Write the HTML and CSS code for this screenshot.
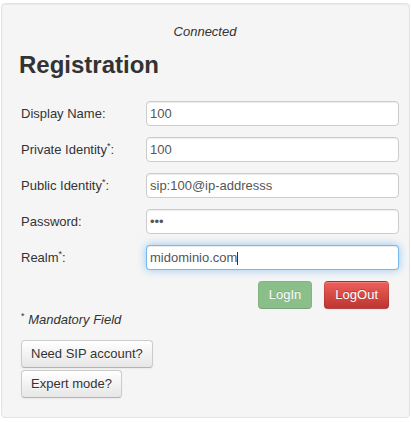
FILE: index.html
```html
<!DOCTYPE html>
<html lang="en">
<head>
    <meta charset="UTF-8">
    <title>Registration</title>
<link rel="stylesheet" href="styles.css">
</head>
<body>

<div class="page">
    <div class="well">
        <div class="status"><i>Connected</i></div>
        <h2>Registration</h2>

        <div class="form-grid">
            <label for="display-name">Display Name:</label>
            <input type="text" id="display-name" value="100">

            <label for="private-identity">Private Identity<sup>*</sup>:</label>
            <input type="text" id="private-identity" value="100">

            <label for="public-identity">Public Identity<sup>*</sup>:</label>
            <input type="text" id="public-identity" value="sip:100@ip-addresss">

            <label for="password">Password:</label>
            <input type="password" id="password" value="abc">

            <label for="realm">Realm<sup>*</sup>:</label>
            <div class="field-wrap">
                <input type="text" id="realm" class="focused" value="midominio.com">
                <span class="caret"></span>
            </div>
        </div>

        <div class="actions">
            <button class="btn btn-success disabled" type="button">LogIn</button>
            <button class="btn btn-danger" type="button">LogOut</button>
        </div>

        <p class="mandatory"><sup>*</sup> <i>Mandatory Field</i></p>

        <div class="extra">
            <button class="btn" type="button">Need SIP account?</button>
            <button class="btn" type="button">Expert mode?</button>
        </div>
    </div>
</div>

</body>
</html>
```

FILE: styles.css
```css
body {
  margin: 0;
  font-family: "Liberation Sans", Arial, sans-serif;
  font-size: 13px;
  line-height: 18px;
  color: #333;
}

.page {
  padding: 3px 1px;
}

.well {
  width: 409px;
  box-sizing: border-box;
  padding: 19px;
  background-color: #f5f5f5;
  border: 1px solid #e3e3e3;
  border-radius: 4px;
  box-shadow: inset 0 1px 1px rgba(0, 0, 0, 0.05);
}

.status {
  text-align: center;
  padding-right: 1px;
}

h2 {
  margin: 9px 0 0 -2px;
  font-size: 24px;
  line-height: 30px;
  font-weight: bold;
  color: #333;
}

.form-grid {
  display: grid;
  grid-template-columns: 125px 1fr;
  row-gap: 11px;
  align-items: center;
  margin: 21px -9px 0 0;
}

.form-grid label {
  display: block;
}

sup {
  font-size: 9px;
  line-height: 0;
  vertical-align: 5px;
}

input {
  display: block;
  width: 100%;
  height: 25px;
  box-sizing: border-box;
  padding: 0 3px;
  font-family: "Liberation Sans", Arial, sans-serif;
  font-size: 13px;
  color: #555;
  background-color: #fff;
  border: 1px solid #ccc;
  border-radius: 4px;
  box-shadow: inset 0 1px 1px rgba(0, 0, 0, 0.075);
  outline: none;
}

input.focused {
  border-color: rgba(82, 168, 236, 0.8);
  box-shadow: inset 0 1px 1px rgba(0, 0, 0, 0.075), 0 0 8px rgba(82, 168, 236, 0.6);
}

.field-wrap {
  position: relative;
}

.caret {
  position: absolute;
  left: 91px;
  top: 7px;
  width: 1px;
  height: 13px;
  background-color: #333;
}

.actions {
  display: flex;
  justify-content: flex-end;
  gap: 12px;
  margin-top: 11px;
  padding-right: 1px;
}

.btn {
  height: 28px;
  box-sizing: border-box;
  padding: 0 9px;
  font-family: "Liberation Sans", Arial, sans-serif;
  font-size: 13px;
  line-height: 26px;
  color: #333;
  text-shadow: 0 1px 1px rgba(255, 255, 255, 0.75);
  background-color: #f5f5f5;
  background-image: linear-gradient(#fff, #e6e6e6);
  border: 1px solid #ccc;
  border-bottom-color: #b3b3b3;
  border-radius: 4px;
  box-shadow: inset 0 1px 0 rgba(255, 255, 255, 0.2), 0 1px 2px rgba(0, 0, 0, 0.05);
  cursor: pointer;
}

.btn-success,
.btn-danger {
  padding: 0 10px;
  color: #fff;
  text-shadow: 0 -1px 0 rgba(0, 0, 0, 0.25);
  border-color: rgba(0, 0, 0, 0.1) rgba(0, 0, 0, 0.1) rgba(0, 0, 0, 0.25);
}

.btn-success {
  background-color: #51a351;
  background-image: linear-gradient(#62c462, #51a351);
}

.btn-success.disabled {
  background-image: none;
  opacity: 0.65;
  box-shadow: none;
  cursor: default;
}

.btn-danger {
  background-color: #bd362f;
  background-image: linear-gradient(#ee5f5b, #bd362f);
}

.mandatory {
  margin: 2px 0 0;
}

.extra {
  display: flex;
  flex-direction: column;
  align-items: flex-start;
  gap: 2px;
  margin-top: 11px;
}
```
